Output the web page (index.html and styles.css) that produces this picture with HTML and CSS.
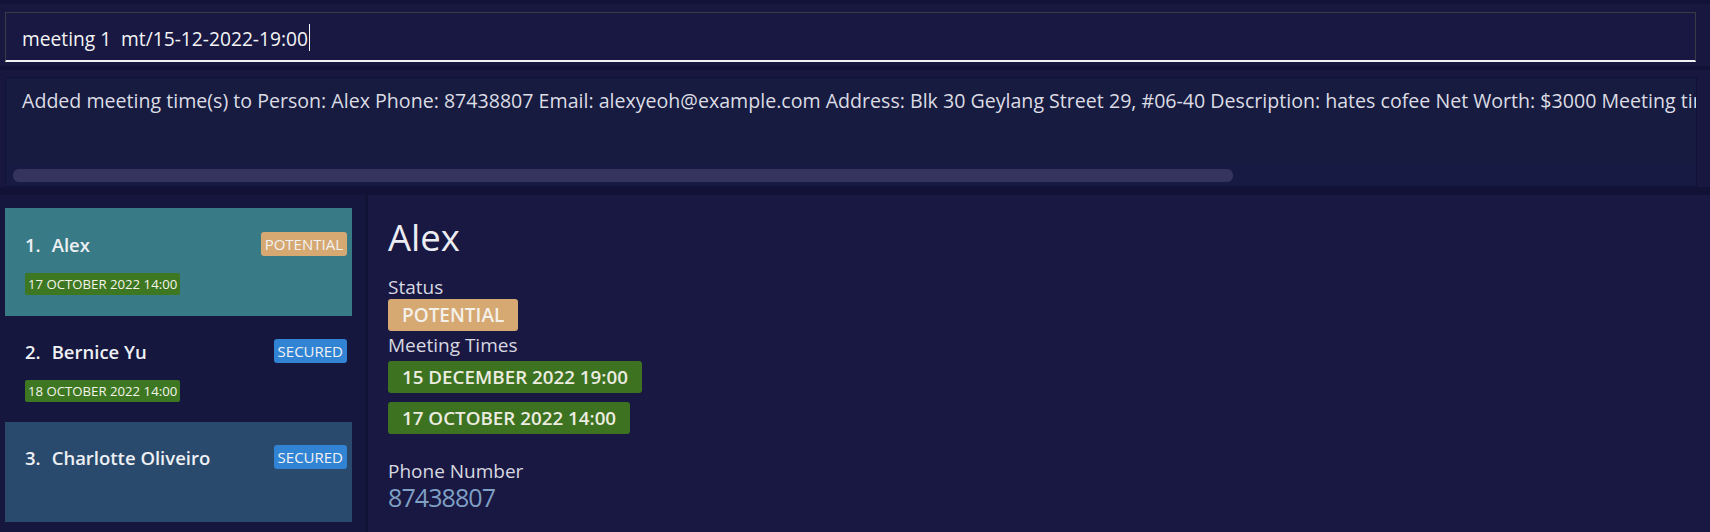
FILE: index.html
```html
<!DOCTYPE html>
<html lang="en">
<head>
<meta charset="utf-8">
<title>Address Book</title>
<link rel="stylesheet" href="styles.css">
</head>
<body>
<div class="app">
  <section class="command-section">
    <div class="command-box"><span class="command-text">meeting 1&nbsp; mt/15-12-2022-19:00</span><span class="caret"></span></div>
  </section>
  <section class="result-section">
    <div class="result-box">
      <div class="result-text">Added meeting time(s) to Person: Alex Phone: 87438807 Email: alexyeoh@example.com Address: Blk 30 Geylang Street 29, #06-40 Description: hates cofee Net Worth: $3000 Meeting times: [15 December 2022 19:00, 17 October 2022 14:00]</div>
      <div class="hscroll"><div class="hscroll-thumb"></div></div>
    </div>
  </section>
  <main class="lower">
    <aside class="list-pane">
      <div class="card card-selected">
        <div class="card-row">
          <div class="card-name"><span class="idx">1.</span><span>Alex</span></div>
          <span class="badge badge-potential">POTENTIAL</span>
        </div>
        <div class="card-tags"><span class="tag">17 OCTOBER 2022 14:00</span></div>
      </div>
      <div class="card">
        <div class="card-row">
          <div class="card-name"><span class="idx">2.</span><span>Bernice Yu</span></div>
          <span class="badge badge-secured">SECURED</span>
        </div>
        <div class="card-tags"><span class="tag">18 OCTOBER 2022 14:00</span></div>
      </div>
      <div class="card card-alt">
        <div class="card-row">
          <div class="card-name"><span class="idx">3.</span><span>Charlotte Oliveiro</span></div>
          <span class="badge badge-secured">SECURED</span>
        </div>
      </div>
    </aside>
    <section class="detail-pane">
      <h1 class="detail-name">Alex</h1>
      <div class="label label-status">Status</div>
      <div class="detail-badge-row"><span class="detail-badge">POTENTIAL</span></div>
      <div class="label label-meetings">Meeting Times</div>
      <div class="detail-tags">
        <span class="detail-tag">15 DECEMBER 2022 19:00</span>
        <span class="detail-tag">17 OCTOBER 2022 14:00</span>
      </div>
      <div class="label label-phone">Phone Number</div>
      <div class="value">87438807</div>
    </section>
  </main>
</div>
</body>
</html>
```
FILE: styles.css
```css
* { box-sizing: border-box; }
html, body {
  margin: 0;
  padding: 0;
  width: 1710px;
  height: 532px;
  overflow: hidden;
  background: #17173f;
  font-family: "Open Sans", "Noto Sans", sans-serif;
  color: #e4e4ea;
}
.app {
  display: flex;
  flex-direction: column;
  height: 532px;
}
.command-section {
  border-top: 4px solid #13133a;
  padding: 8px 14px 0 5px;
  height: 66px;
  background: #17173f;
}
.command-box {
  height: 50px;
  border: 1px solid #3b3b48;
  border-bottom: 2px solid #f2f2f2;
  background: #181842;
  display: flex;
  align-items: center;
  padding-left: 16px;
  padding-top: 4px;
}
.command-text {
  font-size: 19.2px;
  color: #f4f4f4;
  white-space: pre;
}
.caret {
  display: inline-block;
  width: 1px;
  height: 27px;
  background: #f4f4f4;
  margin-left: 1px;
  margin-top: -3px;
}
.result-section {
  border-top: 4px solid #121238;
  padding: 7px 13px 0 5px;
  height: 121px;
}
.result-box {
  height: 110px;
  border: 1px solid #10123a;
  background: linear-gradient(#161b3f 0 78%, #171a42 78% 100%);
  display: flex;
  flex-direction: column;
  justify-content: space-between;
  padding: 8px 0 4px 0;
  overflow: hidden;
}
.result-text {
  font-size: 19.6px;
  line-height: 30px;
  padding-left: 16px;
  white-space: nowrap;
  overflow: hidden;
  color: #dcdce4;
}
.hscroll {
  padding-left: 7px;
}
.hscroll-thumb {
  width: 1220px;
  height: 13px;
  border-radius: 6px;
  background: #35345f;
}
.lower {
  flex: 1;
  display: flex;
  border-top: 8px solid #121236;
}
.list-pane {
  width: 368px;
  flex: none;
  background: #15173e;
  border-right: 3px solid #111335;
  padding: 13px 13px 0 5px;
  display: flex;
  flex-direction: column;
}
.card {
  height: 106px;
  padding: 23px 5px 0 20px;
}
.card-selected {
  height: 108px;
  padding-top: 24px;
  background: #387a86;
}
.card-alt {
  height: 100px;
  background: #2a4a6d;
}
.card-row {
  display: flex;
  justify-content: space-between;
  align-items: center;
  height: 24px;
}
.card-name {
  font-size: 18.5px;
  font-weight: 600;
  color: #eef0f4;
  display: flex;
  gap: 11px;
}
.badge {
  font-size: 15px;
  line-height: 24px;
  height: 24px;
  padding: 0 4px;
  border-radius: 3px;
  color: #f2f2f2;
}
.badge-potential { background: #d6a872; }
.badge-secured { background: #3183d4; }
.card-tags {
  margin-top: 17px;
  display: flex;
}
.tag {
  font-size: 13.2px;
  line-height: 22px;
  height: 22px;
  padding: 0 3px;
  border-radius: 2px;
  background: #3d7722;
  color: #f4f4ea;
}
.detail-pane {
  flex: 1;
  background: #181842;
  padding: 19px 20px 0 20px;
}
.detail-name {
  margin: 0;
  font-size: 36.5px;
  line-height: 46px;
  font-weight: 400;
  color: #ececf2;
}
.label {
  font-size: 19px;
  line-height: 22px;
  color: #d8d8e0;
}
.label-status { margin-top: 16px; }
.detail-badge-row { margin-top: 1px; display: flex; }
.detail-badge {
  height: 32px;
  line-height: 32px;
  font-size: 19px;
  font-weight: 600;
  padding: 0 14px;
  border-radius: 3px;
  background: #d6a872;
  color: #f4f0ea;
}
.label-meetings { margin-top: 3px; }
.detail-tags {
  margin-top: 5px;
  display: flex;
  flex-direction: column;
  align-items: flex-start;
  gap: 9px;
}
.detail-tag {
  height: 32px;
  line-height: 32px;
  font-size: 18.8px;
  font-weight: 600;
  padding: 0 14px;
  border-radius: 3px;
  background: #3d7220;
  color: #ecece0;
}
.label-phone { margin-top: 26px; }
.value {
  font-size: 25px;
  line-height: 30px;
  letter-spacing: -0.9px;
  color: #7f9fc4;
}
```
